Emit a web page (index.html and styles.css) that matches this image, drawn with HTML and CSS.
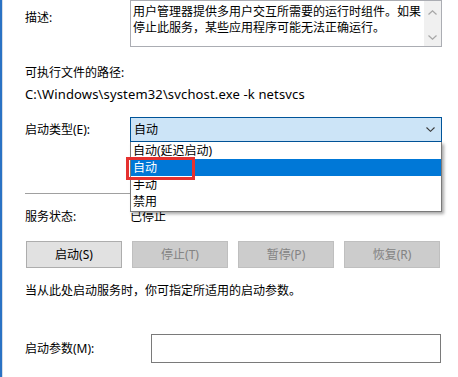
FILE: index.html
```html
<!DOCTYPE html>
<html lang="zh-CN">
<head>
<meta charset="utf-8">
<link rel="stylesheet" href="styles.css">
</head>
<body>
<div class="window">
  <div class="edge"></div>
  <div class="content">
    <div class="row desc-row">
      <div class="label desc-label">描述:</div>
      <div class="desc-box">
        <div class="desc-text">用户管理器提供多用户交互所需要的运行时组件。如果<br>停止此服务，某些应用程序可能无法正确运行。</div>
        <div class="scrollbar">
          <svg class="sb-arrow" width="9" height="5" viewBox="0 0 9 5"><path d="M0.5 4.5 L4.5 0.8 L8.5 4.5" fill="none" stroke="#a6a6a6" stroke-width="1.2"/></svg>
          <svg class="sb-arrow" width="9" height="5" viewBox="0 0 9 5"><path d="M0.5 0.5 L4.5 4.2 L8.5 0.5" fill="none" stroke="#a6a6a6" stroke-width="1.2"/></svg>
        </div>
      </div>
    </div>
    <div class="text path-label">可执行文件的路径:</div>
    <div class="text path-value">C:\Windows\system32\svchost.exe -k netsvcs</div>
    <div class="row type-row">
      <div class="label">启动类型(E):</div>
      <div class="combo-wrap">
        <div class="combo">
          <span>自动</span>
          <svg class="combo-arrow" width="9" height="5" viewBox="0 0 9 5"><path d="M0.5 0.5 L4.5 4.3 L8.5 0.5" fill="none" stroke="#3a3a3a" stroke-width="1.1"/></svg>
        </div>
        <ul class="dropdown">
          <li class="item">自动(延迟启动)</li>
          <li class="item selected">自动</li>
          <li class="item">手动</li>
          <li class="item">禁用</li>
          <li class="mark"></li>
        </ul>
      </div>
    </div>
    <div class="separator"></div>
    <div class="row status-row">
      <div class="label">服务状态:</div>
      <div class="text">已停止</div>
    </div>
    <div class="buttons">
      <div class="btn">启动(S)</div>
      <div class="btn disabled">停止(T)</div>
      <div class="btn disabled">暂停(P)</div>
      <div class="btn disabled">恢复(R)</div>
    </div>
    <div class="text hint">当从此处启动服务时，你可指定所适用的启动参数。</div>
    <div class="row param-row">
      <div class="label param-label">启动参数(M):</div>
      <div class="input"></div>
    </div>
  </div>
</div>
</body>
</html>
```

FILE: styles.css
```css
* { box-sizing: border-box; }
html, body {
  margin: 0;
  padding: 0;
  background: #ffffff;
}
body {
  font-family: "Noto Sans", "Noto Sans CJK SC", sans-serif;
  font-size: 12px;
  line-height: 16px;
  color: #000;
  width: 458px;
  height: 377px;
  overflow: hidden;
}
.window {
  display: flex;
  height: 377px;
}
.edge {
  width: 3px;
  flex: none;
  border-left: 2px solid #2a72c4;
  background: #d6dde6;
}
.content {
  flex: 1;
  padding-left: 22px;
  display: flex;
  flex-direction: column;
}
.row {
  display: flex;
  align-items: center;
}
.label {
  width: 105px;
  flex: none;
  white-space: nowrap;
}
.text { white-space: nowrap; height: 16px; }

.desc-row {
  align-items: flex-start;
  height: 47px;
}
.desc-label { margin-top: 10px; }
.desc-box {
  width: 312px;
  height: 47px;
  border: 1px solid #abadb3;
  display: flex;
  background: #fff;
}
.desc-text {
  flex: 1;
  padding: 3px 0 0 2px;
  white-space: nowrap;
  overflow: hidden;
}
.scrollbar {
  width: 17px;
  flex: none;
  background: #f0f0f0;
  display: flex;
  flex-direction: column;
  justify-content: space-between;
  align-items: center;
  padding: 9px 0 6px;
}
.sb-arrow { display: block; }

.path-label { margin-top: 18px; }
.path-value {
  margin-top: 5px;
  font-size: 13px;
  letter-spacing: 0.15px;
}

.type-row {
  margin-top: 15px;
  height: 25px;
}
.combo-wrap {
  position: relative;
  width: 312px;
  height: 25px;
}
.combo {
  height: 25px;
  background: #cce4f7;
  border: 1px solid #005499;
  display: flex;
  align-items: center;
  justify-content: space-between;
  padding: 0 6px 0 3px;
}
.combo-arrow { display: block; }
.dropdown {
  position: absolute;
  left: 0;
  top: 25px;
  width: 312px;
  margin: 0;
  padding: 0 0 1px;
  list-style: none;
  background: #fff;
  border: 1px solid #7a7a7a;
  border-top: none;
  box-shadow: 2px 2px 3px rgba(0, 0, 0, 0.35);
  z-index: 5;
}
.item {
  height: 17px;
  line-height: 17px;
  padding-left: 2px;
}
.item.selected {
  background: #0078d7;
  color: #fff;
}
.mark {
  position: absolute;
  left: -5px;
  top: 15px;
  width: 69px;
  height: 23px;
  border: 3px solid #e5312f;
}

.separator {
  margin-top: 51px;
  height: 1px;
  width: 417px;
  background: #a0a0a0;
}
.status-row { margin-top: 15px; height: 16px; }

.buttons {
  margin-top: 16px;
  margin-left: 1px;
  display: flex;
  gap: 10px;
}
.btn {
  width: 96px;
  height: 27px;
  display: flex;
  align-items: center;
  justify-content: center;
  background: #e1e1e1;
  border: 1px solid #adadad;
  color: #000;
}
.btn.disabled {
  background: #cccccc;
  border-color: #bfbfbf;
  color: #838383;
}
.hint { margin-top: 15px; }

.param-row {
  margin-top: 35px;
  height: 29px;
}
.param-label { width: 126px; }
.input {
  width: 290px;
  height: 29px;
  border: 1px solid #7a7a7a;
  background: #fff;
}
```
